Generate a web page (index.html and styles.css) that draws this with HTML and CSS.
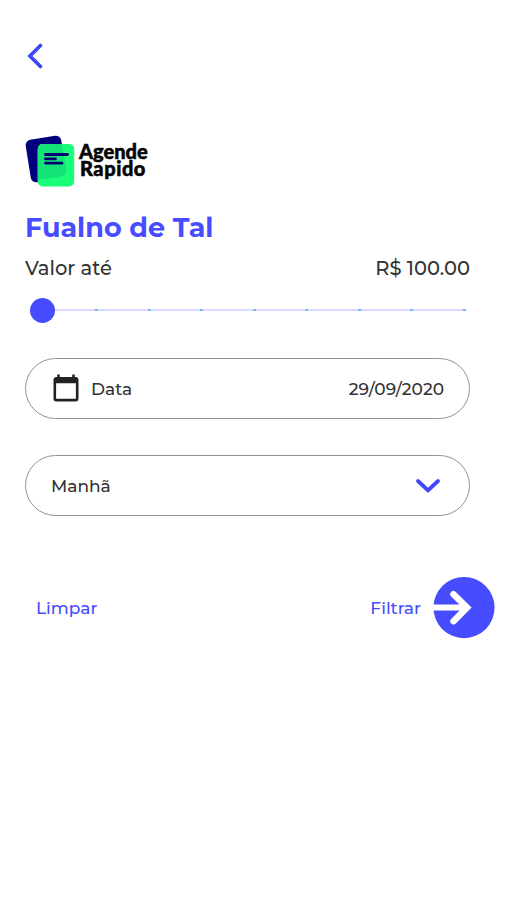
FILE: index.html
```html
<!DOCTYPE html>
<html lang="pt-BR">
<head>
<meta charset="utf-8">
<title>Agende Rapido</title>
<link rel="stylesheet" href="styles.css">
</head>
<body>
<main class="screen">
  <button class="back" aria-label="Voltar">
    <svg width="20" height="28" viewBox="0 0 20 28"><path d="M15.500 3.500 5 14l10.500 10.500"/></svg>
  </button>
  <div class="brand">
    <svg class="brand-mark" width="50" height="52" viewBox="0 0 50 52">
      <rect x="3" y="2.500" width="36" height="43" rx="5.500" fill="#00007c" transform="rotate(-9 21 24)"/>
      <rect x="12.700" y="9" width="36.500" height="42.500" rx="5" fill="#19fd79"/>
      <path d="M12.700 14a5 5 0 0 1 5-5H36.900L41.200 34q.8 6.500-4.700 7.300L12.700 45z" fill="#14e478"/>
      <path d="M20.500 19.500h22M20.500 23.900h10M20.500 28.200h16.500" stroke="#050072" stroke-width="2.800" stroke-linecap="round"/>
    </svg>
    <div class="brand-name"><span class="agende">Agende</span><span class="rapido">Rapido</span></div>
  </div>
  <h1>Fualno de Tal</h1>
  <div class="price"><span class="price-label">Valor até</span><span class="price-value">R$ 100.00</span></div>
  <div class="slider"><span class="thumb"></span><i></i><i></i><i></i><i></i><i></i><i></i><i></i><i></i></div>
  <div class="field date">
    <svg width="26" height="28" viewBox="0 0 26 28"><path fill-rule="evenodd" d="M4.200.5h2.600v2.400h12.400V.5h2.600v2.400h.7a3 3 0 0 1 3 3v18.600a3 3 0 0 1-3 3h-19a3 3 0 0 1-3-3V5.900a3 3 0 0 1 3-3h.7zM3.100 9.200v15.600h19.800V9.200z" fill="#222"/></svg>
    <span class="date-label">Data</span><span class="date-value">29/09/2020</span>
  </div>
  <div class="field period">
    <span class="period-value">Manhã</span>
    <svg width="26" height="18" viewBox="0 0 26 18"><path d="m3 4 10 9.500L23 4"/></svg>
  </div>
  <div class="actions">
    <span class="clear">Limpar</span>
    <span class="filter">Filtrar</span>
    <svg width="62" height="62" viewBox="0 0 62 62"><circle cx="31" cy="30.600" r="30.600" fill="#474dff"/><path d="M0 30.500h33" stroke="#fff" stroke-width="6"/><path d="M20.500 17.200 34 30.500 20.500 44.200" fill="none" stroke="#fff" stroke-width="6.500" stroke-linecap="round"/></svg>
  </div>
</main>
</body>
</html>
```
FILE: styles.css
```css
* { box-sizing: border-box; }
body { margin: 0; background: #fff; color: #333; font-family: Montserrat, Inter, sans-serif; font-weight: 500; }
.screen { width: 507px; height: 900px; padding: 42px 37px 0 25px; overflow: hidden; }
svg { display: block; flex: none; }
.back { display: block; padding: 0; border: 0; background: none; }
.back path, .period path { fill: none; stroke: #4148f5; stroke-width: 3.8; stroke-linecap: round; stroke-linejoin: miter; }
.brand { display: flex; margin-top: 65px; height: 52px; }
.brand-name { display: flex; flex-direction: column; margin-left: 4px; padding-top: 8px; color: #050505; font: 900 20px/17px Lato, sans-serif; -webkit-text-stroke: .5px #050505; }
.rapido { padding-left: 1px; letter-spacing: .55px; }
h1 { margin: 23px 0 0; color: #474dff; font-size: 27px; line-height: 36px; font-weight: 700; white-space: nowrap; }
.price { display: flex; justify-content: space-between; margin-top: 9px; font-size: 19.5px; line-height: 26px; }
.slider { display: flex; align-items: center; justify-content: space-between; height: 26px; margin: 16px 4px 0 5px; background: linear-gradient(#dcd8ff, #dcd8ff) 0 12px / 100% 2px no-repeat; }
.slider i { width: 3px; height: 2px; background: #78b5f3; }
.thumb { width: 25px; height: 25px; margin-right: -9.5px; border-radius: 50%; background: #474dff; }
.field { display: flex; align-items: center; width: 445px; height: 61px; border: 1.5px solid #929292; border-radius: 31px; font-size: 17px; line-height: 24px; }
.date { margin-top: 35px; padding: 0 25px 0 27px; }
.date svg { margin-top: -2px; }
.date-label { margin-left: 12px; }
.date-value { margin-left: auto; }
.period { margin-top: 36px; padding: 0 28px 0 25px; justify-content: space-between; }
.actions { display: flex; align-items: center; width: 470px; height: 62px; margin-top: 61px; padding-left: 11px; color: #474dff; font-size: 17px; }
.filter { margin-left: auto; margin-right: 12px; }
```
